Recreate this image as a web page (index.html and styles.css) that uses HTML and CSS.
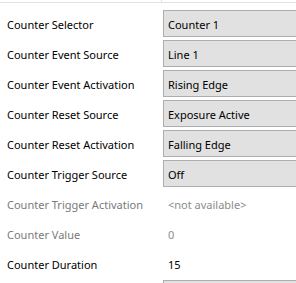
FILE: index.html
```html
<!DOCTYPE html>
<html>
<head>
<meta charset="utf-8">
<link rel="stylesheet" href="styles.css">
</head>
<body>
<div class="grid">
  <div class="head"><div class="head-l"></div><div class="head-r"></div></div>
  <div class="rows">
    <div class="row"><div class="label">Counter Selector</div><div class="value box">Counter 1</div></div>
    <div class="row"><div class="label">Counter Event Source</div><div class="value box">Line 1</div></div>
    <div class="row"><div class="label">Counter Event Activation</div><div class="value box">Rising Edge</div></div>
    <div class="row"><div class="label">Counter Reset Source</div><div class="value box">Exposure Active</div></div>
    <div class="row"><div class="label">Counter Reset Activation</div><div class="value box">Falling Edge</div></div>
    <div class="row"><div class="label">Counter Trigger Source</div><div class="value box">Off</div></div>
    <div class="row"><div class="label disabled">Counter Trigger Activation</div><div class="value plain na">&lt;not available&gt;</div></div>
    <div class="row"><div class="label disabled">Counter Value</div><div class="value plain dim">0</div></div>
    <div class="row"><div class="label">Counter Duration</div><div class="value plain">15</div></div>
    <div class="row"><div class="label"></div><div class="value box"></div></div>
  </div>
</div>
</body>
</html>
```
FILE: styles.css
```css
html, body {
  margin: 0;
  padding: 0;
  background: #ffffff;
}
body {
  width: 296px;
  height: 283px;
  overflow: hidden;
  font-family: "Noto Sans", "Open Sans", sans-serif;
  font-size: 11px;
  color: #000000;
}
.head {
  display: grid;
  grid-template-columns: 162px 1fr;
  height: 2px;
  border-bottom: 1px solid #e3e3e3;
}
.head-l {
  border-right: 1px solid #e3e3e3;
}
.rows {
  padding-top: 7px;
  display: flex;
  flex-direction: column;
  gap: 3px;
}
.row {
  display: grid;
  grid-template-columns: 163px 1fr;
  height: 27px;
}
.label {
  display: flex;
  align-items: center;
  padding-left: 7px;
  padding-top: 1px;
  white-space: nowrap;
}
.label.disabled {
  color: #7a7a7a;
}
.value {
  display: flex;
  align-items: center;
  padding-top: 1px;
  white-space: nowrap;
}
.box {
  background: #e1e1e1;
  border: 1px solid #adadad;
  border-right: none;
  padding-left: 4px;
}
.plain {
  padding-left: 5px;
}
.na {
  color: #8c8c8c;
}
.dim {
  color: #8c8c8c;
}
```
